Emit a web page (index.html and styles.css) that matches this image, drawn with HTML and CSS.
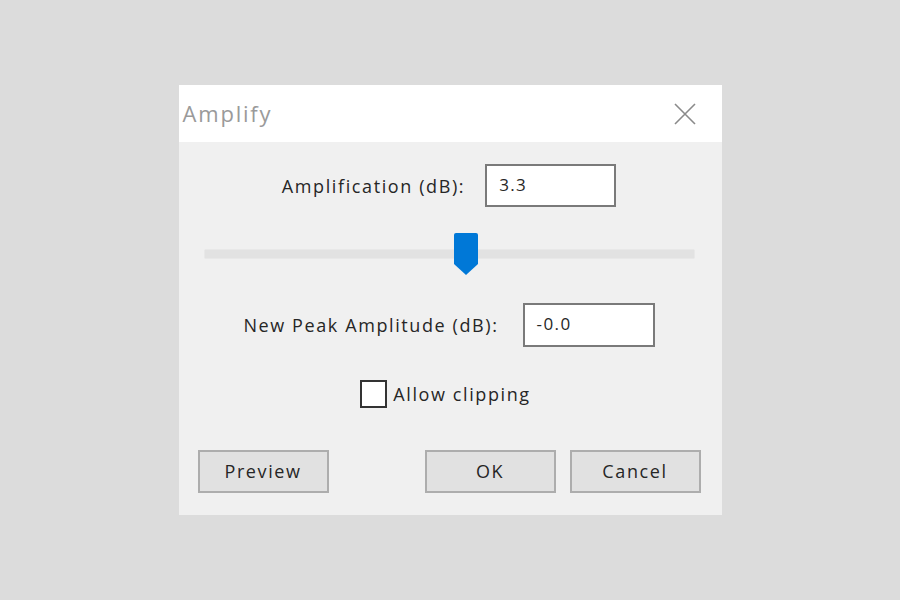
FILE: index.html
```html
<!DOCTYPE html>
<html>
<head>
<meta charset="utf-8">
<link rel="stylesheet" href="styles.css">
</head>
<body>
<div class="dialog">
  <div class="titlebar">
    <span class="title">Amplify</span>
    <svg class="close" width="22" height="22" viewBox="0 0 22 22"><path d="M1 1 L21 21 M21 1 L1 21" stroke="#8a8a8a" stroke-width="1.6" fill="none"/></svg>
  </div>
  <div class="content">
    <div class="field-row row-amp">
      <span class="label">Amplification (dB):</span>
      <div class="input">3.3</div>
    </div>
    <div class="slider">
      <div class="track"></div>
      <svg class="thumb" width="24" height="42" viewBox="0 0 24 42"><path d="M2 0 H22 Q24 0 24 2 V31 L12 42 L0 31 V2 Q0 0 2 0 Z" fill="#0078d7"/></svg>
    </div>
    <div class="field-row row-peak">
      <span class="label">New Peak Amplitude (dB):</span>
      <div class="input">-0.0</div>
    </div>
    <div class="check-row">
      <span class="checkbox"></span>
      <span class="label">Allow clipping</span>
    </div>
    <div class="buttons">
      <div class="btn">Preview</div>
      <div class="right-btns">
        <div class="btn">OK</div>
        <div class="btn">Cancel</div>
      </div>
    </div>
  </div>
</div>
</body>
</html>
```
FILE: styles.css
```css
html, body {
  margin: 0;
  padding: 0;
}
body {
  background: #dcdcdc;
  width: 900px;
  height: 600px;
  display: flex;
  align-items: center;
  justify-content: center;
  font-family: "Open Sans", "Noto Sans", sans-serif;
  color: #333;
}
.dialog {
  width: 543px;
  height: 430px;
  display: flex;
  flex-direction: column;
  background: #f0f0f0;
}
.titlebar {
  height: 57px;
  background: #fff;
  display: flex;
  align-items: center;
  justify-content: space-between;
  padding: 0 26px 0 4px;
}
.title {
  font-size: 22px;
  letter-spacing: 1.8px;
  color: #9a9a9a;
  margin-top: -2px;
}
.close {
  display: block;
}
.content {
  flex: 1;
  display: flex;
  flex-direction: column;
  padding: 22px 21px 22px 19px;
}
.label {
  font-size: 18px;
  font-weight: 500;
  letter-spacing: 1.6px;
  color: #262626;
}
.field-row {
  display: flex;
  align-items: center;
  justify-content: center;
}
.row-amp {
  gap: 20px;
  height: 43px;
}
.row-peak {
  gap: 24px;
  height: 44px;
  margin-top: 28px;
}
.input {
  box-sizing: border-box;
  width: 131px;
  height: 100%;
  background: #fff;
  border: 2px solid #7a7a7a;
  font-size: 17px;
  font-weight: 500;
  letter-spacing: 1.4px;
  padding: 0 0 3px 12px;
  display: flex;
  align-items: center;
  color: #262626;
}
.row-peak .input {
  width: 132px;
}
.slider {
  position: relative;
  height: 42px;
  margin: 26px 6px 0 6px;
  display: flex;
  align-items: center;
}
.track {
  flex: 1;
  height: 8px;
  background: #e2e2e2;
  border: 1px solid #e8e8e8;
  border-radius: 2px;
}
.thumb {
  position: absolute;
  left: 250px;
  top: 0;
}
.check-row {
  display: flex;
  align-items: center;
  justify-content: center;
  gap: 6px;
  height: 28px;
  margin-top: 33px;
  padding-right: 7px;
}
.checkbox {
  box-sizing: border-box;
  width: 27px;
  height: 28px;
  border: 2px solid #333;
  background: #fff;
}
.buttons {
  display: flex;
  justify-content: space-between;
  height: 43px;
  margin-top: 42px;
}
.right-btns {
  display: flex;
  gap: 14px;
}
.btn {
  box-sizing: border-box;
  width: 131px;
  height: 43px;
  background: #e1e1e1;
  border: 2px solid #adadad;
  display: flex;
  align-items: center;
  justify-content: center;
  font-size: 18px;
  font-weight: 500;
  letter-spacing: 1.6px;
  padding-bottom: 2px;
  color: #262626;
}
```
